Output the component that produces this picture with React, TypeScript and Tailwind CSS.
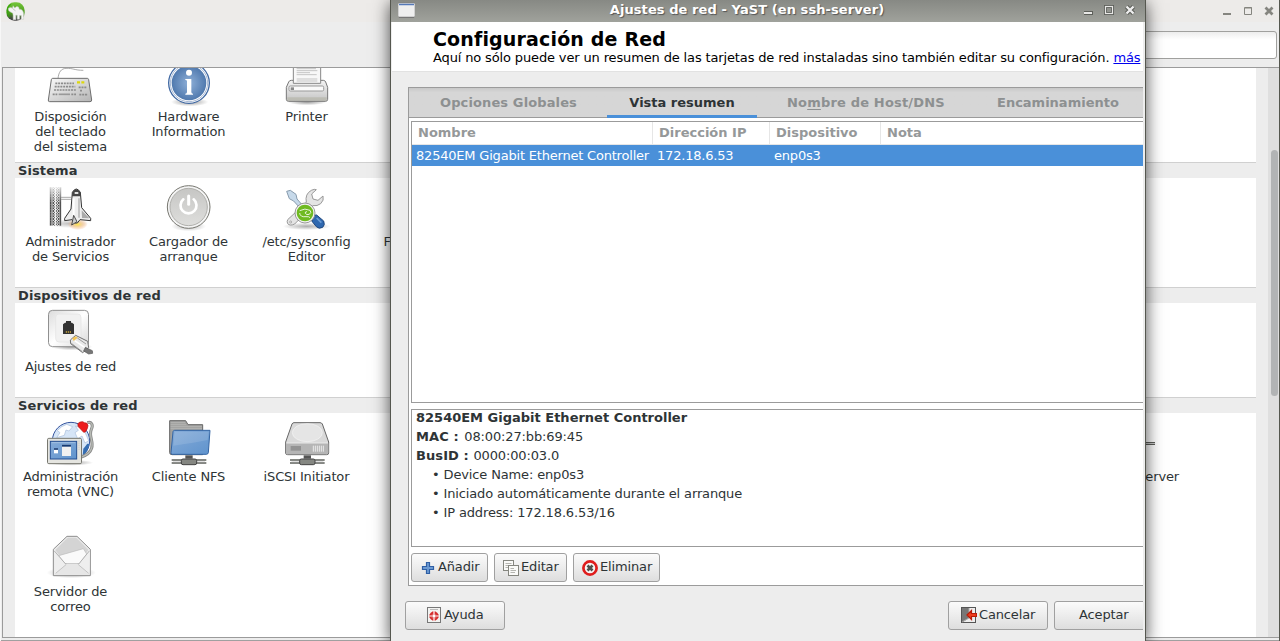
import React from "react";

type IconProps = { box: string; children: React.ReactNode };

function Glyph({ box, children }: IconProps) {
  return (
    <svg viewBox={box} className="h-12 w-12 shrink-0 overflow-visible">
      {children}
    </svg>
  );
}

function Gradients() {
  return (
    <svg className="absolute h-0 w-0">
      <defs>
        <linearGradient id="metal" x1="0" y1="0" x2="1" y2="1">
          <stop offset="0" stopColor="#fafafa" />
          <stop offset="1" stopColor="#b4b4b4" />
        </linearGradient>
        <linearGradient id="pale" x1="0" y1="0" x2="1" y2="1">
          <stop offset="0" stopColor="#dcdcdc" />
          <stop offset="0.5" stopColor="#ffffff" />
          <stop offset="1" stopColor="#d8d8d8" />
        </linearGradient>
        <linearGradient id="down" x1="0" y1="0" x2="0" y2="1">
          <stop offset="0" stopColor="#f4f4f4" />
          <stop offset="1" stopColor="#c4c4c4" />
        </linearGradient>
        <linearGradient id="disc" x1="0" y1="0" x2="0" y2="1">
          <stop offset="0" stopColor="#c6c6c4" />
          <stop offset="1" stopColor="#dededc" />
        </linearGradient>
        <linearGradient id="blue" x1="0" y1="0" x2="1" y2="1">
          <stop offset="0" stopColor="#85abd8" />
          <stop offset="1" stopColor="#5f93cd" />
        </linearGradient>
        <radialGradient id="info">
          <stop offset="0" stopColor="#8fb0d8" />
          <stop offset="1" stopColor="#5079ae" />
        </radialGradient>
        <radialGradient id="shade">
          <stop offset="0" stopColor="#000" stopOpacity="0.4" />
          <stop offset="1" stopColor="#000" stopOpacity="0" />
        </radialGradient>
        <radialGradient id="flame">
          <stop offset="0" stopColor="#ffe94a" />
          <stop offset="0.45" stopColor="#f6c070" stopOpacity="0.6" />
          <stop offset="1" stopColor="#f08c50" stopOpacity="0" />
        </radialGradient>
        <linearGradient id="geeko" x1="0" y1="0" x2="0" y2="1">
          <stop offset="0" stopColor="#74c63a" />
          <stop offset="0.6" stopColor="#4a9a1c" />
          <stop offset="0.9" stopColor="#444" />
        </linearGradient>
        <pattern id="truss" width="8" height="8" patternUnits="userSpaceOnUse">
          <rect width="8" height="8" fill="#fff" />
          <path d="M0 0L8 8M8 0L0 8" stroke="#222" strokeWidth="2.2" />
        </pattern>
        <linearGradient id="fadeTop" x1="0" y1="0" x2="0" y2="1">
          <stop offset="0" stopColor="#fff" stopOpacity="0.8" />
          <stop offset="0.4" stopColor="#fff" stopOpacity="0" />
        </linearGradient>
      </defs>
    </svg>
  );
}

const Keyboard = () => (
  <Glyph box="141 174 144 144">
    <path d="M174 236C176 215 184 206 198 205C218 204 224 211 250 211" fill="none" stroke="#999" strokeWidth="2.5" />
    <path d="M158 235H262Q265 235 266 239L275 300Q275 305 270 305H149Q144 305 145 300L154 239Q155 235 158 235Z" fill="url(#metal)" stroke="#6e6e6e" strokeWidth="3" />
    <g stroke="#8c8c8c" strokeWidth="5" strokeDasharray="6 2.5">
      <path d="M166 250H222M164 260H226M162 270H228M236 262H260M240 272H248M238 284H264" />
      <path d="M158 283H172M214 283H228" />
    </g>
    <path d="M176 283H210" stroke="#999" strokeWidth="5" />
    <path d="M231 247H240M244 247H253" stroke="#ddd80c" strokeWidth="7" />
  </Glyph>
);

const Info = () => (
  <Glyph box="495 174 144 144">
    <ellipse cx="569" cy="306" rx="56" ry="13" fill="url(#shade)" />
    <circle cx="567" cy="249" r="61" fill="#fff" stroke="#3f68a3" strokeWidth="4" />
    <circle cx="567" cy="249" r="56" fill="none" stroke="#aabbd6" strokeWidth="3" />
    <circle cx="567" cy="249" r="52" fill="url(#info)" />
    <circle cx="567" cy="218" r="9" fill="#fff" />
    <path d="M556 237H574V276Q574 281 579 281V284H556V281Q561 281 561 276V244Q561 240 556 240Z" fill="#fff" />
  </Glyph>
);

const Printer = () => (
  <Glyph box="849 174 144 144">
    <ellipse cx="921" cy="306" rx="58" ry="10" fill="url(#shade)" />
    <path d="M874 241H970Q975 241 977 246L983 262V298Q983 304 976 304H866Q859 304 859 298V262L866 246Q868 241 874 241Z" fill="url(#down)" stroke="#777" strokeWidth="3" />
    <path d="M880 190H962V250H880Z" fill="#f8f8f8" stroke="#888" strokeWidth="3" />
    <path d="M890 206H948M890 212H952M890 218H930M890 224H950M890 237H952M890 243H952" stroke="#bbb" strokeWidth="2.5" />
    <rect x="867" y="258" width="104" height="15" rx="4" fill="#fafafa" stroke="#999" strokeWidth="3" />
    <rect x="872" y="262" width="10" height="8" fill="#888" />
    <path d="M862 297H980" stroke="#b5b5a8" strokeWidth="10" opacity=".65" />
  </Glyph>
);

const Shuttle = () => (
  <Glyph box="141 84 144 144">
    <ellipse cx="205" cy="206" rx="60" ry="13" fill="url(#shade)" opacity=".6" />
    <ellipse cx="233" cy="208" rx="30" ry="17" fill="url(#flame)" />
    <rect x="151" y="97" width="32" height="115" fill="url(#truss)" />
    <path d="M151 97V212M182 97V212" stroke="#333" strokeWidth="2.5" />
    <path d="M167 97V212" stroke="#fff" strokeWidth="3" />
    <rect x="148" y="95" width="37" height="118" fill="url(#fadeTop)" />
    <path d="M183 127H213M183 133H213" stroke="#999" strokeWidth="2.5" />
    <path d="M217 112Q229 92 241 112L245 158L272 190V197L240 194L232 204H224L216 194L194 197V190L213 162Z" fill="#eee" stroke="#333" strokeWidth="3" />
    <path d="M217 112Q229 93 241 112L242 124H216Z" fill="#444" />
    <path d="M224 114H235" stroke="#fff" strokeWidth="5" />
    <path d="M221 130V188" stroke="#fff" strokeWidth="6" />
    <path d="M237 130V188" stroke="#bbb" strokeWidth="5" />
    <path d="M221 181L215 210L231 200Z" fill="#ccc" stroke="#333" strokeWidth="2.5" />
    <path d="M245 166L268 190L246 189Z" fill="#aaa" />
  </Glyph>
);

const Power = () => (
  <Glyph box="495 84 144 144">
    <ellipse cx="566" cy="214" rx="52" ry="15" fill="url(#shade)" opacity=".7" />
    <circle cx="566" cy="156" r="64" fill="#f4f4f4" stroke="#777770" strokeWidth="3" />
    <circle cx="566" cy="156" r="56" fill="url(#disc)" stroke="#b0b0ac" strokeWidth="3" />
    <path d="M550 133A24 24 0 1 0 581 133" fill="none" stroke="#fff" strokeWidth="8" strokeLinecap="round" />
    <path d="M566 123V148" stroke="#fff" strokeWidth="9" strokeLinecap="round" />
  </Glyph>
);

const Tools = () => (
  <Glyph box="849 84 144 144">
    <ellipse cx="920" cy="214" rx="72" ry="11" fill="url(#shade)" opacity=".8" />
    <path d="M863 194L919 142Q914 117 934 106Q944 101 949 104L935 117L939 132L954 136L969 123Q973 136 962 146Q952 154 938 152L884 207Q870 214 863 206Q860 200 863 194Z" fill="#e4e4e4" stroke="#999" strokeWidth="3" />
    <circle cx="872" cy="201" r="3" fill="#fff" stroke="#888" strokeWidth="2" />
    <path d="M860 109L871 106L888 118L891 132L928 174L920 181L881 138L868 131Z" fill="#c6d9ea" stroke="#889bad" strokeWidth="3" />
    <path d="M937 181L950 180L971 198Q976 210 968 217Q957 223 949 215L936 199Z" fill="#2f68b0" stroke="#20487e" strokeWidth="3" />
    <path d="M950 189L964 203" stroke="#6c9cd4" strokeWidth="5" />
    <circle cx="915" cy="174" r="30" fill="#f2f2f2" stroke="#858585" strokeWidth="2.5" />
    <circle cx="915" cy="174" r="25" fill="#6fba21" />
    <path d="M899 167Q915 158 930 166Q936 172 928 178Q919 181 916 175Q914 170 921 170M899 174Q900 187 918 185Q928 184 930 188" fill="none" stroke="#fff" strokeWidth="2.500" />
  </Glyph>
);

const Jack = () => (
  <Glyph box="141 39 144 144">
    <ellipse cx="215" cy="155" rx="62" ry="11" fill="url(#shade)" />
    <rect x="145.500" y="46" width="120" height="109" rx="12" fill="url(#pale)" stroke="#909090" strokeWidth="3" />
    <rect x="167" y="57" width="76" height="84" rx="10" fill="#f1f1f1" stroke="#e3e3e3" strokeWidth="2" />
    <path d="M189 88L195 83H198V78H213V83H216L222 88V117H189Z" fill="#333" />
    <path d="M199 108V114M205 108V114M211 108V114" stroke="#b99b3c" strokeWidth="3" />
    <path d="M211 135L227 121L263 139L266 158L248 173L212 146Z" fill="#e8e8e8" stroke="#707070" strokeWidth="3" />
    <path d="M214 145L247 170M232 129L258 147" stroke="#8c8c8c" strokeWidth="2.500" />
    <path d="M224 137L255 158" stroke="#fff" strokeWidth="5" />
    <path d="M217 130L227 124L233 128L221 138Z" fill="#f4c553" />
    <path d="M256 157L277 167L278 175L266 177L251 168Z" fill="#777" stroke="#555" strokeWidth="2" />
  </Glyph>
);

const Remote = () => (
  <Glyph box="141 24 144 144">
    <ellipse cx="210" cy="158" rx="70" ry="9" fill="url(#shade)" />
    <circle cx="213" cy="93" r="56" fill="#d6e5f7" stroke="#37569f" strokeWidth="3" />
    <path d="M185 50L200 43L218 50L207 63L198 60L193 76L170 83L180 68L172 62ZM226 48L250 55L266 92L255 99L246 78L233 86L225 68L235 61Z" fill="#fff" stroke="#a8bddb" strokeWidth="2" />
    <path d="M268 102Q264 126 248 137L250 116L262 101Z" fill="#356eb3" />
    <path d="M262 38C274 34 281 44 274 58C265 78 282 94 275 114C270 132 252 139 240 143" fill="none" stroke="#888" strokeWidth="9" />
    <path d="M262 38C274 34 281 44 274 58C265 78 282 94 275 114C270 132 252 139 240 143" fill="none" stroke="#b9bcb6" strokeWidth="4" />
    <path d="M251 67L235 50Q230 39 241 36Q249 33 253 38Q263 37 264 47Q264 54 256 66Z" fill="#ed1c1c" stroke="#b01010" strokeWidth="2" />
    <rect x="142.500" y="85" width="102" height="76" rx="4" fill="#e5e5e0" stroke="#77776f" strokeWidth="3" />
    <rect x="151" y="94" width="79" height="53" fill="url(#blue)" stroke="#254f92" strokeWidth="3" />
    <path d="M155 98H226" stroke="#b5ceea" strokeWidth="2" />
    <rect x="162" y="115" width="12" height="15" fill="#fff" />
    <path d="M162 117H174" stroke="#153a73" strokeWidth="5" />
    <rect x="186" y="104" width="27" height="34" fill="#f1f1f1" />
    <path d="M186 107H213" stroke="#153a73" strokeWidth="6" />
    <path d="M237 92V120" stroke="#bbb" strokeWidth="3" strokeDasharray="3 3" />
  </Glyph>
);

const Wire = ({ cx }: { cx: number }) => (
  <g>
    <path d={`M${cx - 52} 150H${cx + 52}M${cx - 52} 159H${cx + 52}`} stroke="#5e605b" strokeWidth="4" />
    <path d={`M${cx - 48} 155H${cx + 48}`} stroke="#ccc" strokeWidth="2" />
    <rect x={cx - 11} y="136" width="22" height="10" fill="#555" />
    <rect x={cx - 23} y="147" width="46" height="17" rx="5" fill="#858782" stroke="#444" strokeWidth="3" />
  </g>
);

const FolderNet = () => (
  <Glyph box="495 24 144 144">
    <path d="M509 32H557L564 44H608V134H516Q509 134 509 128Z" fill="#a2a2a0" stroke="#666" strokeWidth="3" />
    <path d="M512 38H555M512 44H558M512 50H606M512 56H606" stroke="#bdbdbb" strokeWidth="2" />
    <path d="M524 61H630L625 128Q624 133 619 133H517Q512 133 513 128L519 65Q520 61 524 61Z" fill="url(#blue)" stroke="#3465a4" strokeWidth="3" />
    <path d="M524 65H626L623 90Q600 95 575 99T520 107Z" fill="#fff" opacity=".12" />
    <Wire cx={567} />
  </Glyph>
);

const DriveNet = () => (
  <Glyph box="849 24 144 144">
    <path d="M882 38H960Q965 38 967 42L986 96V129Q986 134 980 134H863Q857 134 857 129V96L876 42Q878 38 882 38Z" fill="#d9d9d9" stroke="#666" strokeWidth="3" />
    <ellipse cx="922" cy="68" rx="45" ry="27" fill="#e5e5e5" stroke="#f4f4f4" strokeWidth="2" />
    <path d="M858 100H985V129Q985 133 980 133H863Q858 133 858 129Z" fill="#b5b5b5" />
    <path d="M859 99H984" stroke="#f5f5f5" strokeWidth="2" />
    <rect x="872" y="108" width="31" height="14" fill="#929292" />
    <path d="M940 107V125M946 107V125M952 107V125M958 107V125M964 107V125M970 107V125" stroke="#f5f5f5" strokeWidth="2.5" />
    <Wire cx={922} />
  </Glyph>
);

const Mail = () => (
  <Glyph box="141 369 144 144">
    <ellipse cx="214" cy="488" rx="74" ry="17" fill="url(#shade)" opacity=".8" />
    <path d="M201 379H231L271 418V497H160V418Z" fill="#ebebeb" stroke="#8d8d8d" strokeWidth="3" />
    <path d="M203 383H229L265 419L240 460H194L166 420Z" fill="#d4d4d4" />
    <path d="M176 437L250 416L260 432L239 461H195Z" fill="#fafafa" stroke="#bbb" strokeWidth="2" />
    <path d="M162 421L197 464L164 494ZM270 421L236 464L268 494Z" fill="#eee" />
    <path d="M163 423L197 462H236L268 423" fill="none" stroke="#aaa" strokeWidth="2.500" />
    <path d="M164 494L201 461H232L268 494Z" fill="#e6e6e6" />
    <path d="M167 490L198 464M266 490L235 464" stroke="#c4c4c4" strokeWidth="3" />
  </Glyph>
);

type ModuleProps = { icon?: React.ReactNode; lines: string[] };

function Module({ icon, lines }: ModuleProps) {
  return (
    <div className="flex h-[115px] w-[118px] shrink-0 flex-col items-center pt-[5px]">
      <div className="flex h-[51px] items-start">{icon}</div>
      {lines.map((line) => (
        <div key={line} className="h-[15px] pr-px leading-[15px] whitespace-nowrap">
          {line}
        </div>
      ))}
    </div>
  );
}

type SectionProps = { title?: string; height: string; children: React.ReactNode };

function Section({ title, height, children }: SectionProps) {
  return (
    <section className="flex shrink-0 flex-col">
      {title && (
        <h2 className="h-[16px] border-t border-[#d0d0d0] bg-[#ededed] pl-[3px] text-[13px] leading-[15px] font-bold tracking-[0.1px]">
          {title}
        </h2>
      )}
      <div className={`bg-white ${height} -ml-[3px] flex flex-col`}>{children}</div>
    </section>
  );
}

const Row = ({ children }: { children: React.ReactNode }) => <div className="flex">{children}</div>;

function Geeko() {
  return (
    <svg viewBox="17 5 56 56" className="h-[19px] w-[19px]">
      <rect x="18" y="6" width="54" height="54" rx="24" fill="url(#geeko)" />
      <path d="M32 12Q22 17 21 28Q21 42 27 50" fill="none" stroke="#35a50c" strokeWidth="3" />
      <path d="M25 23Q31 20 36 23L38 16L43 23Q48 15 54 20L56 26Q68 26 69 40V56H62V45H57V56H50V44L46 44V57H38V45L37 38L29 34Q22 30 25 23Z" fill="#f3f3f3" stroke="#c4c9c0" strokeWidth="1.500" />
      <path d="M36 24L45 31" stroke="#aab5a4" strokeWidth="2" />
    </svg>
  );
}

function ControlCenter() {
  return (
    <div className="flex h-[641px] w-[1280px] flex-col border-r border-l border-r-[#55574f] border-l-[#f7f7f7] bg-[#ededed]">
      <header className="flex h-[22px] shrink-0 items-start justify-between bg-[#edebe9] pt-[2px] pr-[4px] pl-[5px]">
        <Geeko />
        <svg viewBox="0 0 52 18" className="h-[18px] w-[52px]" fill="none" stroke="#85857f">
          <path d="M0 12H8" strokeWidth="2" />
          <path d="M21.500 6V12.500H28.500V5.500H21.500M21 6H29" />
          <path d="M42.500 5.500L49.500 12.500M49.500 5.500L42.500 12.500" strokeWidth="2.800" />
        </svg>
      </header>
      <div className="flex h-[45px] shrink-0 justify-end pt-[9px] pr-[2px]">
        <div className="h-[28px] w-[300px] rounded-[3px] border border-[#a0a09e] bg-gradient-to-b from-[#ededed] to-white to-30%" />
      </div>
      <div className="ml-[1px] flex h-[571px] shrink-0 border-t border-b border-l border-[#9b9b9b]">
        <div className="flex w-[1253px] flex-col overflow-hidden pl-[12px]">
          <div className="-mt-[15px] flex h-[584px] shrink-0 flex-col overflow-hidden">
            <Section height="h-[109px]">
              <Row>
                <Module icon={<Keyboard />} lines={["Disposición", "del teclado", "del sistema"]} />
                <Module icon={<Info />} lines={["Hardware", "Information"]} />
                <Module icon={<Printer />} lines={["Printer"]} />
              </Row>
            </Section>
            <Section title="Sistema" height="h-[109px]">
              <Row>
                <Module icon={<Shuttle />} lines={["Administrador", "de Servicios"]} />
                <Module icon={<Power />} lines={["Cargador de", "arranque"]} />
                <Module icon={<Tools />} lines={["/etc/sysconfig", "Editor"]} />
                <Module lines={["Fecha y hora"]} />
              </Row>
            </Section>
            <Section title="Dispositivos de red" height="h-[94px]">
              <Row>
                <Module icon={<Jack />} lines={["Ajustes de red"]} />
              </Row>
            </Section>
            <Section title="Servicios de red" height="h-[224px]">
              <Row>
                <Module icon={<Remote />} lines={["Administración", "remota (VNC)"]} />
                <Module icon={<FolderNet />} lines={["Cliente NFS"]} />
                <Module icon={<DriveNet />} lines={["iSCSI Initiator"]} />
                <div className="w-[693px] shrink-0" />
                <div className="flex w-[120px] shrink-0 flex-col items-end pt-[29px]">
                  <div className="mr-[24px] h-[3px] w-[30px] border-t border-b border-[#5e605b] bg-[#ccc]" />
                  <div className="mt-[24px] leading-[15px]">Server</div>
                </div>
              </Row>
              <Row>
                <Module icon={<Mail />} lines={["Servidor de", "correo"]} />
              </Row>
            </Section>
          </div>
        </div>
        <div className="w-[12px] bg-[#ededed]" />
        <div className="flex grow flex-col items-end bg-[#dfdfdf] pt-[82px] pr-px">
          <div className="h-[246px] w-[7px] rounded-full bg-[#b2b4b5]" />
        </div>
      </div>
      <div className="mt-[2px] h-px bg-[#a0a0a0]" />
    </div>
  );
}

type ButtonProps = { icon?: React.ReactNode; label: string; size: string };

function Button({ icon, label, size }: ButtonProps) {
  return (
    <button
      className={`flex h-[29px] shrink-0 items-center rounded-[3px] border border-[#a0a0a0] bg-gradient-to-b from-[#fbfbfb] to-[#dedede] pb-[2px] whitespace-nowrap ${size}`}
    >
      {icon}
      {label}
    </button>
  );
}

const PlusIcon = () => (
  <svg viewBox="0 0 16 16" className="mt-[2px] mr-[2px] h-4 w-4">
    <path d="M6.500 2.500H9.500V6.500H13.500V9.500H9.500V13.500H6.500V9.500H2.500V6.500H6.500Z" fill="#6d9bd3" stroke="#2f5fa5" strokeWidth="1.200" />
  </svg>
);

const EditIcon = () => (
  <svg viewBox="0 0 16 16" className="mt-[2px] mr-[2px] h-4 w-4" fill="#fafaf8" stroke="#85867f">
    <rect x=".5" y=".5" width="10" height="10" />
    <path d="M2.500 3.500H8.500M2.500 5.500H8.500M2.500 7.500H5" stroke="#b5b5b0" />
    <rect x="5.500" y="5.500" width="10" height="10" />
    <path d="M7.500 8.500H11M7.500 10.500H13M7.500 12.500H12" stroke="#b5b5b0" />
  </svg>
);

const DeleteIcon = () => (
  <svg viewBox="0 0 16 16" className="mt-[2px] mr-[2px] h-4 w-4">
    <circle cx="8" cy="8" r="6.600" fill="#f4f4f4" stroke="#df1d1d" strokeWidth="2.700" />
    <path d="M5.500 5.500L10.500 10.500M10.500 5.500L5.500 10.500" stroke="#4d4f4b" strokeWidth="2.600" />
  </svg>
);

const HelpIcon = () => (
  <svg viewBox="0 0 16 16" className="mt-[1px] mr-[2px] h-4 w-4">
    <rect x="1.500" y=".5" width="13" height="15" fill="#f3f3f1" stroke="#777" />
    <path d="M4 2.500H12" stroke="#bbb" />
    <circle cx="8" cy="9" r="3.600" fill="none" stroke="#d52a2a" strokeWidth="2" />
    <path d="M8 4.500V13.500M3.500 9H12.500" stroke="#d52a2a" strokeWidth="3" />
    <path d="M8 4V14M3 9H13" stroke="#fff" strokeWidth="1.200" />
    <circle cx="8" cy="9" r="1.300" fill="#fff" />
  </svg>
);

const CancelIcon = () => (
  <svg viewBox="0 0 16 16" className="mt-[1px] mr-[2px] h-4 w-4">
    <rect x=".5" y=".5" width="14" height="15" fill="#eee" stroke="#555" />
    <path d="M1 1H8V11L2 15H1Z" fill="#777" />
    <path d="M1 15L8 11V1" fill="none" stroke="#aaa" />
    <path d="M6 8L10.500 3.500V6.500H15.500V9.500H10.500V12.500Z" fill="#ee3c1c" stroke="#b81b08" strokeWidth="1.200" />
  </svg>
);

function Dialog() {
  return (
    <div className="absolute top-0 left-[390px] flex h-[641px] w-[756px] flex-col border-r border-l border-[#55574f] bg-[#ededed] shadow-[0_3px_16px_rgba(0,0,0,0.7)]">
      <header className="flex h-[22px] shrink-0 bg-gradient-to-b from-[#878984] to-[#a0a29c] pr-[7px] pl-[7px]">
        <svg viewBox="0 0 17 17" className="mt-[2px] h-[17px] w-[17px]">
          <rect y="1" width="17" height="14" rx="1" fill="#efefef" stroke="#777" strokeWidth=".5" />
          <path d="M1 2.500H16" stroke="#5579b8" strokeWidth="1.500" />
          <path d="M1 15.500H16" stroke="#777" />
        </svg>
        <div className="grow pt-[2px] pr-[5px] text-center leading-[15px] font-bold tracking-[0.08px] text-white [text-shadow:1px_1px_1px_#555]">
          Ajustes de red - YaST (en ssh-server)
        </div>
        <svg viewBox="0 0 54 20" className="h-5 w-[54px] shrink-0" fill="none">
          <path d="M-1 13H9" stroke="#5d5f5a" strokeWidth="4" />
          <path d="M0 13H8" stroke="#e8e8e6" strokeWidth="2" />
          <rect x="21.500" y="6.500" width="7" height="7" stroke="#5d5f5a" strokeWidth="3" />
          <rect x="21.500" y="6.500" width="7" height="7" stroke="#e8e8e6" strokeWidth="1.200" />
          <path d="M42.500 6.500L49.500 13.500M49.500 6.500L42.500 13.500" stroke="#5d5f5a" strokeWidth="4.500" />
          <path d="M42.500 6.500L49.500 13.500M49.500 6.500L42.500 13.500" stroke="#eee" strokeWidth="2.400" />
        </svg>
      </header>
      <div className="ml-px flex w-[751px] grow flex-col overflow-hidden">
        <div className="h-[50px] shrink-0 border-b border-[#e2e2e2] bg-white pl-[41px] whitespace-nowrap text-black">
          <h1 className="h-[28px] pt-[5px] text-[19px] leading-[24px] font-bold tracking-[0.16px]">Configuración de Red</h1>
          <p className="leading-[16px]">
            Aquí no sólo puede ver un resumen de las tarjetas de red instaladas sino también editar su configuración.{" "}
            <span className="text-[#0000ee] underline">más</span>
          </p>
        </div>
        <div className="mt-[15px] ml-[16px] flex h-[499px] w-[760px] shrink-0 flex-col border border-[#9b9b9b] bg-white">
          <nav className="flex h-[30px] shrink-0 border-b border-[#9b9b9b] bg-gradient-to-b from-[#c8c8c8] to-[#d6d6d6] to-15% font-bold tracking-normal text-[#8d9091]">
            <div className="w-[198px] pt-[7px] pl-[31px] leading-[15px] tracking-[0.12px]">Opciones Globales</div>
            <div className="h-[30px] w-[150px] border-b-[3px] border-[#4a90d9] pt-[7px] text-center leading-[15px] text-[#2e3436]">
              Vista resumen
            </div>
            <div className="w-[210px] pt-[7px] pl-[30px] leading-[15px] tracking-[0.18px]">
              No<span className="underline underline-offset-2">m</span>bre de Host/DNS
            </div>
            <div className="pt-[7px] pl-[30px] leading-[15px]">Encaminamiento</div>
          </nav>
          <div className="mt-[3px] ml-[2px] flex h-[282px] shrink-0 flex-col border border-[#9b9b9b]">
            <div className="flex h-[23px] shrink-0 border-b border-[#e6e6e6] leading-[21px] font-bold tracking-normal text-[#959899]">
              <div className="w-[241px] border-r border-[#e6e6e6] pl-[6px]">Nombre</div>
              <div className="w-[117px] border-r border-[#e6e6e6] pl-[6px]">Dirección IP</div>
              <div className="w-[111px] border-r border-[#e6e6e6] pl-[6px]">Dispositivo</div>
              <div className="pl-[6px]">Nota</div>
            </div>
            <div className="flex h-[21px] shrink-0 bg-[#4a90d9] leading-[21px] tracking-[-0.2px] whitespace-nowrap text-white">
              <div className="w-[241px] pl-[4px]">82540EM Gigabit Ethernet Controller</div>
              <div className="w-[117px] pl-[4px]">172.18.6.53</div>
              <div className="pl-[4px]">enp0s3</div>
            </div>
          </div>
          <div className="mt-[6px] ml-[2px] h-[138px] shrink-0 border border-[#9b9b9b] pl-[4px] leading-[19px]">
            <div className="-mt-[2px] font-bold tracking-normal">82540EM Gigabit Ethernet Controller</div>
            <div>
              <b className="mr-px tracking-[0.08px]">MAC : </b>08:00:27:bb:69:45
            </div>
            <div>
              <b className="tracking-[0.08px]">BusID : </b>0000:00:03.0
            </div>
            <div className="pl-[16px]">
              <div>• Device Name: enp0s3</div>
              <div>• Iniciado automáticamente durante el arranque</div>
              <div>• IP address: 172.18.6.53/16</div>
            </div>
          </div>
          <div className="mt-[6px] ml-[2px] flex gap-[6px]">
            <Button size="w-[77px] pl-[8px]" icon={<PlusIcon />} label="Añadir" />
            <Button size="w-[73px] pl-[8px]" icon={<EditIcon />} label="Editar" />
            <Button size="w-[87px] pl-[8px]" icon={<DeleteIcon />} label="Eliminar" />
          </div>
        </div>
        <div className="mt-[15px] ml-[13px] flex shrink-0">
          <Button size="w-[100px] pl-[20px]" icon={<HelpIcon />} label="Ayuda" />
          <div className="w-[443px] shrink-0" />
          <Button size="w-[100px] pl-[12px]" icon={<CancelIcon />} label="Cancelar" />
          <div className="w-[6px] shrink-0" />
          <Button size="w-[100px] pl-[24px]" label="Aceptar" />
        </div>
      </div>
    </div>
  );
}

export default function App() {
  return (
    <main className="relative h-[641px] w-[1280px] overflow-hidden font-['DejaVu_Sans',sans-serif] text-[13px] tracking-[-0.14px] text-[#2e3436]">
      <Gradients />
      <ControlCenter />
      <Dialog />
    </main>
  );
}
